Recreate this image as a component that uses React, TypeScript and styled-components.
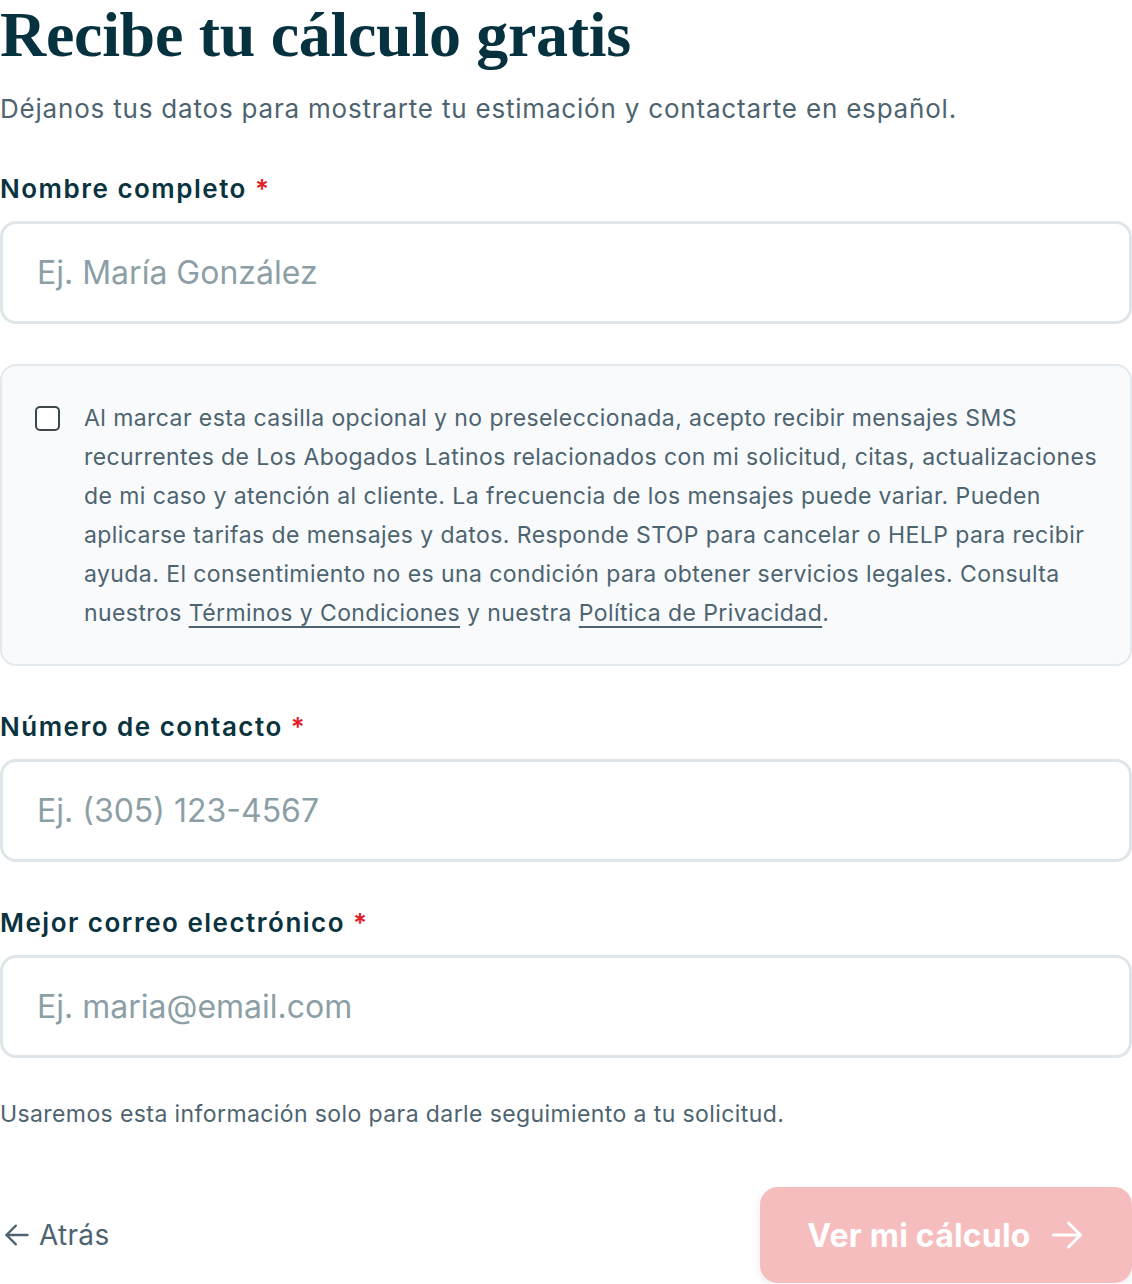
import React from 'react';
import styled, { createGlobalStyle } from 'styled-components';

const GlobalStyle = createGlobalStyle`
  html, body {
    margin: 0;
    padding: 0;
    background: #ffffff;
  }
  body {
    font-family: Inter, "Noto Sans", "Liberation Sans", sans-serif;
    color: #0a3340;
  }
  * {
    box-sizing: border-box;
  }
`;

const Page = styled.div`
  width: 1132px;
  display: flex;
  flex-direction: column;
`;

const Title = styled.h1`
  margin: 0;
  font-family: "Liberation Serif", "DejaVu Serif", serif;
  font-weight: 700;
  font-size: 64px;
  line-height: 70px;
  letter-spacing: -0.3px;
  color: #06323f;
`;

const Subtitle = styled.p`
  margin: 21px 0 0;
  font-size: 26px;
  line-height: 36px;
  letter-spacing: 0.8px;
  color: #4d6470;
`;

const Field = styled.div<{ $top: number }>`
  display: flex;
  flex-direction: column;
  gap: 15px;
  margin-top: ${(p) => p.$top}px;
`;

const Label = styled.label`
  font-size: 26px;
  line-height: 34px;
  font-weight: 600;
  letter-spacing: 1.5px;
  color: #0a3340;
`;

const Required = styled.span`
  color: #e11d2a;
  margin-left: 8px;
`;

const Input = styled.input`
  width: 100%;
  height: 103px;
  padding: 0 34px;
  border: 3px solid #dfe6e9;
  border-radius: 16px;
  background: #ffffff;
  font-family: Inter, "Noto Sans", sans-serif;
  font-size: 32px;
  color: #0a3340;
  outline: none;

  &::placeholder {
    color: #8d9fa6;
  }
`;

const Consent = styled.label`
  margin-top: 40px;
  display: flex;
  align-items: flex-start;
  gap: 24px;
  padding: 33px 16px 31px 33px;
  border: 2px solid #e3e9ec;
  border-radius: 16px;
  background: #f8fafc;
`;

const Box = styled.span`
  flex: none;
  width: 25px;
  height: 25px;
  margin-top: 7px;
  border: 2px solid #3d474b;
  border-radius: 5px;
  background: #ffffff;
`;

const ConsentText = styled.span`
  font-size: 23px;
  line-height: 39px;
  letter-spacing: 0.42px;
  color: #4d6470;
`;

const Link = styled.a`
  color: #4d6470;
  text-decoration: underline;
  text-underline-offset: 5px;
  text-decoration-thickness: 1.5px;
`;

const Note = styled.p`
  margin: 40px 0 0;
  font-size: 23px;
  line-height: 32px;
  letter-spacing: 0.4px;
  color: #4d6470;
`;

const Actions = styled.div`
  margin-top: 57px;
  display: flex;
  align-items: center;
  justify-content: space-between;
`;

const BackButton = styled.button`
  display: flex;
  align-items: center;
  gap: 8px;
  padding: 0 0 0 3px;
  border: none;
  background: none;
  font-family: Inter, "Noto Sans", sans-serif;
  font-size: 28px;
  letter-spacing: 0.3px;
  color: #4d6470;
  cursor: pointer;
`;

const SubmitButton = styled.button`
  display: flex;
  align-items: center;
  justify-content: center;
  gap: 18px;
  height: 96px;
  width: 372px;
  padding: 0;
  border: none;
  border-radius: 18px;
  background: #f6bdbe;
  box-shadow: 0 4px 10px rgba(0, 0, 0, 0.08);
  font-family: Inter, "Noto Sans", sans-serif;
  font-size: 32px;
  font-weight: 700;
  letter-spacing: 0.2px;
  white-space: nowrap;
  color: #ffffff;
  cursor: not-allowed;
`;

const Arrow = ({ dir, size }: { dir: 'left' | 'right'; size: number }) => (
  <svg
    width={size}
    height={size}
    viewBox="0 0 24 24"
    fill="none"
    stroke="currentColor"
    strokeWidth={2}
    strokeLinecap="round"
    strokeLinejoin="round"
  >
    {dir === 'left' ? (
      <>
        <path d="M21 12H3" />
        <path d="M11 20l-8-8 8-8" />
      </>
    ) : (
      <>
        <path d="M3 12h18" />
        <path d="M13 4l8 8-8 8" />
      </>
    )}
  </svg>
);

export default function App() {
  return (
    <>
      <GlobalStyle />
      <Page>
        <Title>Recibe tu cálculo gratis</Title>
        <Subtitle>
          Déjanos tus datos para mostrarte tu estimación y contactarte en español.
        </Subtitle>

        <Field $top={45}>
          <Label>
            Nombre completo<Required>*</Required>
          </Label>
          <Input placeholder="Ej. María González" />
        </Field>

        <Consent>
          <Box />
          <ConsentText>
            Al marcar esta casilla opcional y no preseleccionada, acepto recibir mensajes SMS
            recurrentes de Los Abogados Latinos relacionados con mi solicitud, citas,
            actualizaciones de mi caso y atención al cliente. La frecuencia de los mensajes
            puede variar. Pueden aplicarse tarifas de mensajes y datos. Responde STOP para
            cancelar o HELP para recibir ayuda. El consentimiento no es una condición para
            obtener servicios legales. Consulta nuestros{' '}
            <Link href="#">Términos y Condiciones</Link> y nuestra{' '}
            <Link href="#">Política de Privacidad</Link>.
          </ConsentText>
        </Consent>

        <Field $top={44}>
          <Label>
            Número de contacto<Required>*</Required>
          </Label>
          <Input placeholder="Ej. (305) 123-4567" />
        </Field>

        <Field $top={44}>
          <Label>
            Mejor correo electrónico<Required>*</Required>
          </Label>
          <Input placeholder="Ej. maria@email.com" />
        </Field>

        <Note>Usaremos esta información solo para darle seguimiento a tu solicitud.</Note>

        <Actions>
          <BackButton>
            <Arrow dir="left" size={28} />
            Atrás
          </BackButton>
          <SubmitButton disabled>
            Ver mi cálculo
            <Arrow dir="right" size={36} />
          </SubmitButton>
        </Actions>
      </Page>
    </>
  );
}
